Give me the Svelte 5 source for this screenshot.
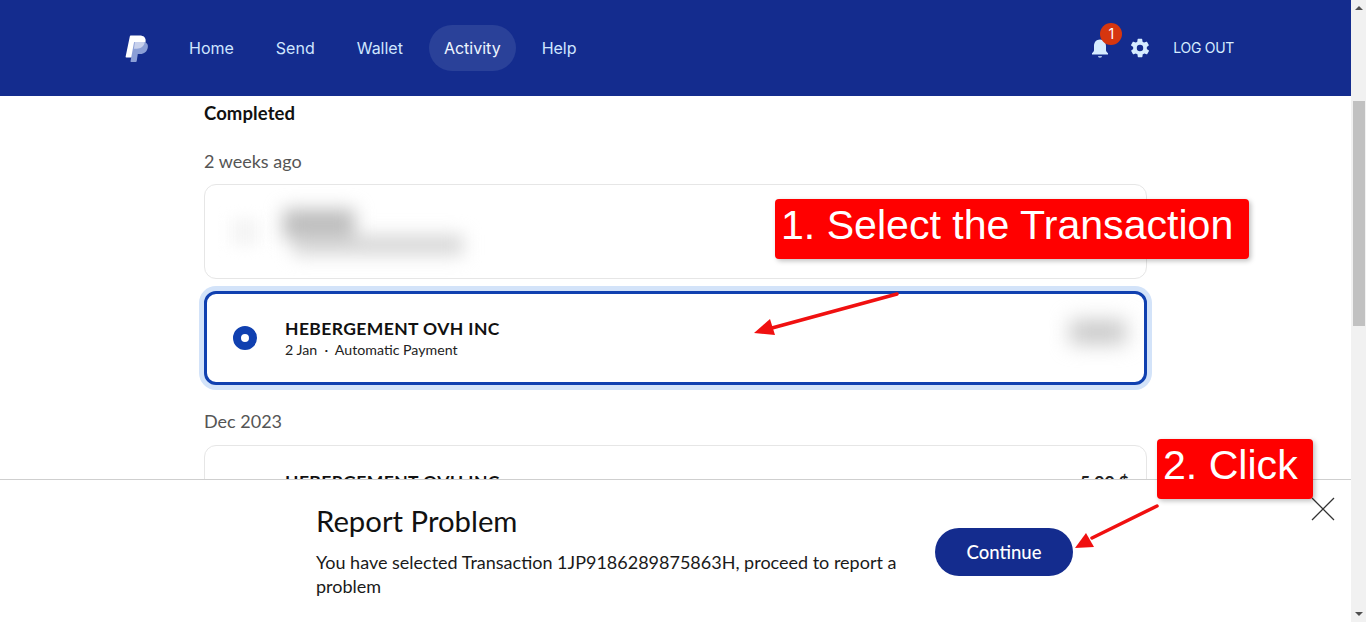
<script>
  const navItems = [
    { label: 'Home' },
    { label: 'Send' },
    { label: 'Wallet' },
    { label: 'Activity', active: true },
    { label: 'Help' },
  ];
</script>

<div class="page">
  <div class="main">
    <header class="topbar">
      <svg class="logo" viewBox="0 0 24 28" width="24" height="28" aria-hidden="true">
        <path fill="#ffffff" d="M6 .5h8.600c4 0 6.600 2.100 6 6-.7 4.700-4 7.200-8.300 7.200H9.200l-1.300 8.200c0 .4-.4.600-.7.600H1.300c-.5 0-.8-.4-.7-.8L4.700 1.900C4.900 1 5.300.5 6 .5z"/>
        <path fill="#8b9fd6" d="M10 7h7.800c3.400 0 5.700 1.900 5 5.500-.7 4.200-3.700 6.500-7.500 6.500h-2.500l-1.100 7.200c-.1.500-.4.800-.9.800H6.200c-.5 0-.8-.4-.7-.8L8.800 8.400C8.900 7.500 9.300 7 10 7z"/>
        <path fill="#c8d1ec" d="M9.900 7h7.800c.7 0 1.400.1 2 .3-.6 4-3.900 6.400-7.900 6.400H8.900z"/>
      </svg>
      <nav class="nav">
        {#each navItems as item}
          <a href="#top" class="nav-item" class:active={item.active}>{item.label}</a>
        {/each}
      </nav>
      <div class="actions">
        <span class="bell">
          <svg viewBox="0 0 24 24" width="24" height="24" aria-hidden="true">
            <path fill="#d6ecff" d="M12 3.500c-3.700 0-6 2.800-6 6.500v4.200c0 1.200-.9 2.100-2 3V18.500h16v-1.300c-1.100-.9-2-1.800-2-3V10c0-3.700-2.300-6.500-6-6.500z"/>
            <path fill="#d6ecff" d="M10 20.200h4c0 .8-.9 1.300-2 1.300s-2-.5-2-1.300z"/>
          </svg>
          <span class="badge">1</span>
        </span>
        <svg class="gear" viewBox="0 0 24 24" width="22" height="22" aria-hidden="true">
          <path fill="#d6ecff" fill-rule="evenodd" d="M19.400 13c.1-.3.100-.7.100-1s0-.7-.1-1l2.100-1.600c.2-.2.200-.4.100-.6l-2-3.500c-.1-.2-.4-.3-.6-.2l-2.500 1c-.5-.4-1.100-.7-1.700-1l-.4-2.600c0-.3-.2-.5-.5-.5h-4c-.3 0-.5.200-.5.500l-.4 2.600c-.6.300-1.200.6-1.700 1l-2.500-1c-.2-.1-.5 0-.6.200l-2 3.500c-.1.200-.1.400.1.600L4.600 11c-.1.300-.1.700-.1 1s0 .7.100 1l-2.100 1.600c-.2.200-.2.400-.1.600l2 3.500c.1.200.4.300.6.200l2.500-1c.5.400 1.100.7 1.700 1l.4 2.600c0 .3.200.5.500.5h4c.3 0 .5-.2.500-.5l.4-2.600c.6-.3 1.200-.6 1.700-1l2.500 1c.2.100.5 0 .6-.2l2-3.500c.1-.2.100-.4-.1-.6zM12 15.500a3.500 3.500 0 1 1 0-7 3.500 3.500 0 0 1 0 7z"/>
        </svg>
        <a href="#top" class="logout">LOG OUT</a>
      </div>
    </header>

    <div class="content">
      <h3 class="status">Completed</h3>
      <h4 class="period">2 weeks ago</h4>
      <div class="card first">
        <div class="blur-dot"></div>
        <div class="blur-lines">
          <div class="blur-a"></div>
          <div class="blur-b"></div>
        </div>
      </div>
      <div class="card selected">
        <span class="radio"></span>
        <div class="info">
          <div class="name">HEBERGEMENT OVH INC</div>
          <div class="meta">2 Jan &nbsp;·&nbsp; Automatic Payment</div>
        </div>
        <div class="blur-amount"></div>
      </div>
      <h4 class="period dec">Dec 2023</h4>
      <div class="card last">
        <div class="info">
          <div class="name">HEBERGEMENT OVH INC</div>
        </div>
        <div class="amount">5.00 $</div>
      </div>
    </div>
  </div>

  <div class="scrollbar">
    <span class="arrow up"></span>
    <div class="track"><div class="thumb"></div></div>
    <span class="arrow down"></span>
  </div>

  <div class="sheet">
    <div class="sheet-text">
      <h2>Report Problem</h2>
      <p>You have selected Transaction 1JP9186289875863H, proceed to report a problem</p>
    </div>
    <button class="continue">Continue</button>
    <svg class="close" viewBox="0 0 24 24" width="24" height="24" aria-hidden="true">
      <path d="M1 1l22 22M23 1L1 23" stroke="#333" stroke-width="1.300" fill="none"/>
    </svg>
  </div>

  <div class="callout one">1. Select the Transaction</div>
  <div class="callout two">2. Click</div>

  <svg class="arrows" viewBox="0 0 1366 622" width="1366" height="622" aria-hidden="true">
    <path d="M897 294L772 328" stroke="#f01010" stroke-width="3.500" stroke-linecap="round" fill="none"/>
    <path d="M754 333L770 319L775 335z" fill="#f01010"/>
    <path d="M1157 506L1092 538" stroke="#f01010" stroke-width="3.500" stroke-linecap="round" fill="none"/>
    <path d="M1075 548L1086 533L1094 547z" fill="#f01010"/>
  </svg>
</div>

<style>
  :global(body) {
    margin: 0;
    background: #fff;
  }

  .page {
    position: relative;
    display: flex;
    width: 1366px;
    height: 622px;
    overflow: hidden;
    font-family: Lato, 'Open Sans', sans-serif;
    color: #111;
  }

  .main {
    flex: 1;
    min-width: 0;
  }

  .topbar {
    display: flex;
    align-items: center;
    height: 96px;
    padding: 0 117px 0 125px;
    background: #142c8e;
  }

  .logo {
    flex: none;
    margin-top: 2px;
  }

  .nav {
    display: flex;
    align-items: center;
    gap: 0;
    margin-left: 19px;
  }

  .nav-item {
    padding: 12px 21px;
    border-radius: 24px;
    font-family: Inter, Roboto, sans-serif;
    font-size: 16px;
    line-height: 22px;
    color: #cfe6ff;
    text-decoration: none;
  }

  .nav-item.active {
    padding: 12px 15px;
    margin: 0 5px 0 5px;
    background: #2a4199;
    color: #eef6ff;
  }

  .actions {
    display: flex;
    align-items: center;
    margin-left: auto;
  }

  .bell {
    position: relative;
    display: block;
    width: 24px;
    height: 24px;
    margin-right: -1px;
    transform: translateX(-1px);
  }

  .badge {
    position: absolute;
    top: -13px;
    left: 12px;
    width: 22px;
    height: 22px;
    border-radius: 50%;
    background: #d6360f;
    color: #fff;
    font-family: Inter, Roboto, sans-serif;
    font-size: 14px;
    line-height: 22px;
    text-align: center;
  }

  .gear {
    margin-left: 17px;
  }

  .logout {
    margin: -2px 0 0 22px;
    font-family: Inter, Roboto, sans-serif;
    font-size: 14px;
    letter-spacing: -0.3px;
    color: #d6ecff;
    text-decoration: none;
  }

  .content {
    padding: 0 204px;
  }

  .status {
    margin: 5px 0 0;
    font-size: 18.500px;
    line-height: 24px;
    font-weight: 700;
    letter-spacing: 0.1px;
    color: #111;
  }

  .period {
    margin: 24px 0 0;
    font-size: 18px;
    line-height: 24px;
    font-weight: 400;
    color: #555;
  }

  .card {
    box-sizing: border-box;
    display: flex;
    align-items: center;
    height: 95px;
    margin-top: 11px;
    border: 1px solid #e6e6e6;
    border-radius: 12px;
    background: #fff;
  }

  .card.first {
    padding-left: 26px;
  }

  .card.selected {
    height: 94px;
    margin-top: 12px;
    padding: 0 12px 0 26px;
    border: 3px solid #1040b0;
    box-shadow: 0 0 0 5px #d3e3f9;
  }

  .card.last {
    align-items: flex-start;
    margin-top: 12px;
    padding: 25px 17px 0 80px;
  }

  .blur-dot {
    flex: none;
    width: 28px;
    height: 28px;
    margin-right: 24px;
    background: #f5f5f5;
    filter: blur(7px);
  }

  .blur-lines {
    filter: blur(9px);
  }

  .blur-a {
    width: 72px;
    height: 30px;
    background: #bdbdbd;
  }

  .blur-b {
    width: 170px;
    height: 20px;
    margin: -4px 0 0 10px;
    background: #d6d6d6;
  }

  .radio {
    flex: none;
    box-sizing: border-box;
    width: 24px;
    height: 24px;
    border: 8px solid #1040b0;
    border-radius: 50%;
    background: #fff;
  }

  .info {
    margin-left: 28px;
  }

  .card.last .info {
    margin-left: 0;
  }

  .name {
    font-size: 17.500px;
    line-height: 22px;
    font-weight: 700;
    letter-spacing: 0.4px;
    color: #111;
  }

  .meta {
    margin-top: 1px;
    font-size: 14.200px;
    line-height: 18px;
    color: #222;
  }

  .blur-amount {
    width: 56px;
    height: 24px;
    margin: -12px 6px 0 auto;
    background: #c8c8c8;
    filter: blur(10px);
  }

  .amount {
    margin-left: auto;
    font-size: 17.500px;
    line-height: 22px;
    font-weight: 700;
    color: #222;
  }

  .scrollbar {
    flex: none;
    display: flex;
    flex-direction: column;
    align-items: center;
    width: 15px;
    background: #f1f1f1;
    position: relative;
    z-index: 2;
  }

  .arrow {
    flex: none;
    width: 0;
    height: 0;
    margin: 6px 0;
    border-left: 4px solid transparent;
    border-right: 4px solid transparent;
  }

  .arrow.up {
    border-bottom: 4px solid #505050;
  }

  .arrow.down {
    border-top: 4px solid #505050;
  }

  .track {
    flex: 1;
    width: 100%;
    padding-top: 85px;
    box-sizing: border-box;
  }

  .thumb {
    width: 12px;
    height: 225px;
    margin: 0 auto;
    background: #c1c1c1;
  }

  .sheet {
    position: absolute;
    left: 0;
    right: 15px;
    bottom: 0;
    height: 143px;
    box-sizing: border-box;
    display: flex;
    align-items: flex-start;
    padding: 23px 0 0 316px;
    border-top: 1px solid #cfcfcf;
    background: #fff;
  }

  .sheet-text {
    width: 600px;
  }

  .sheet h2 {
    margin: 0;
    font-size: 29.300px;
    line-height: 36px;
    font-weight: 400;
    color: #111;
  }

  .sheet p {
    margin: 11px 0 0;
    font-size: 18px;
    line-height: 24px;
    color: #1a1a1a;
  }

  .continue {
    flex: none;
    width: 138px;
    height: 48px;
    margin: 25px 0 0 19px;
    border: none;
    border-radius: 24px;
    background: #142c8e;
    color: #fff;
    font-family: Lato, 'Open Sans', sans-serif;
    font-size: 18.500px;
    font-weight: 500;
  }

  .close {
    position: absolute;
    top: 17px;
    left: 1311px;
  }

  .callout {
    position: absolute;
    height: 60px;
    box-sizing: border-box;
    padding: 0 6px;
    border-radius: 4px;
    background: #ff0000;
    box-shadow: 2px 2px 5px rgba(0, 0, 0, 0.25);
    color: #fff;
    font-family: 'Liberation Sans', Arial, sans-serif;
    font-size: 41.100px;
    line-height: 52px;
    white-space: nowrap;
  }

  .callout.one {
    top: 199px;
    left: 775px;
    width: 474px;
  }

  .callout.two {
    top: 439px;
    left: 1157px;
    width: 156px;
  }

  .arrows {
    position: absolute;
    top: 0;
    left: 0;
    pointer-events: none;
  }
</style>
